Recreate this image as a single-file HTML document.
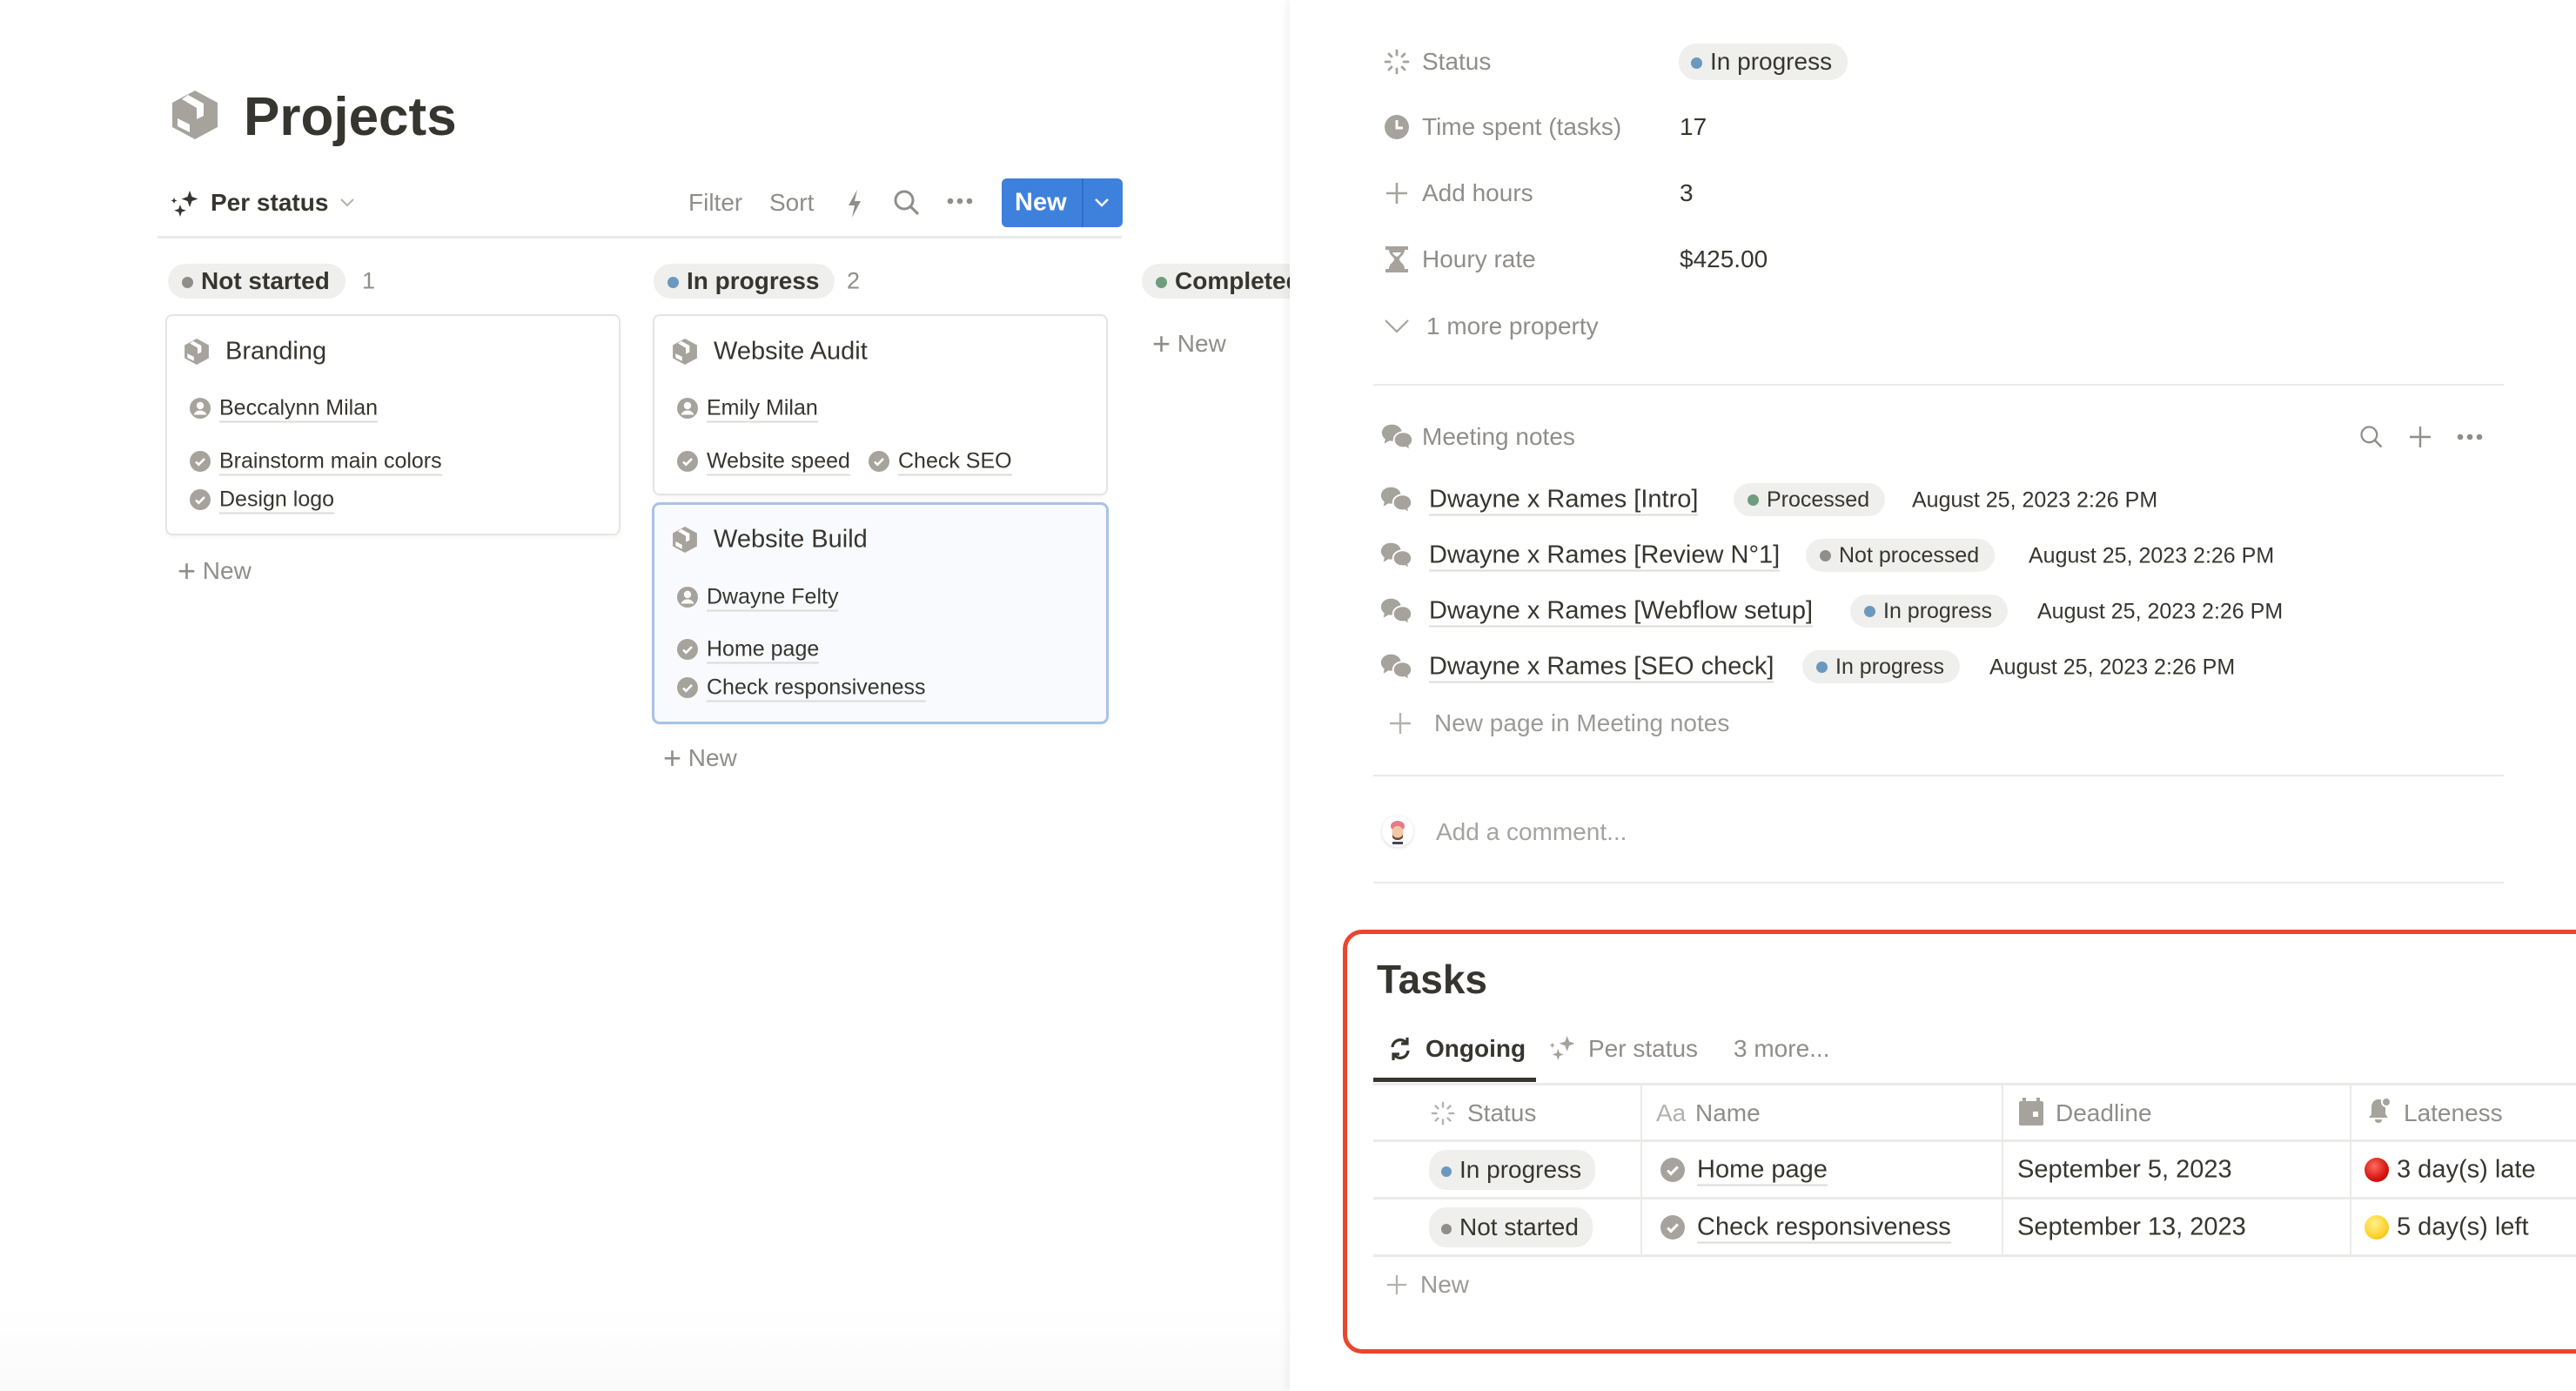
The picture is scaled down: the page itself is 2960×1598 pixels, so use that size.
<!DOCTYPE html>
<html><head><meta charset="utf-8">
<style>
*{margin:0;padding:0;box-sizing:border-box}
html,body{width:2960px;height:1598px;overflow:hidden;background:#fff}
body{position:relative;font-family:"Liberation Sans",sans-serif;color:#37352f}
.a{position:absolute}
.t{position:absolute;line-height:1;white-space:nowrap;transform:translateY(-50%)}
.g{color:#8f8e8a}
.u{border-bottom:2px solid #dcdbd8;padding-bottom:1px}
.pill{position:absolute;height:40px;border-radius:20px;background:#efefed;line-height:40px;white-space:nowrap;transform:translateY(-50%);padding:0 18px 0 16px;font-size:26px}
.pill i{display:inline-block;width:13px;height:13px;border-radius:50%;margin-right:9px;vertical-align:1px}
.blue{background:#6a98bf}.gray{background:#8f8e8a}.green{background:#6f9c7e}
.card{position:absolute;background:#fff;border-radius:6px;box-shadow:0 0 0 2px #e6e5e2,0 3px 6px rgba(0,0,0,.07)}
.ic{position:absolute;transform:translateY(-50%)}
.b500{font-weight:bold}
</style></head><body>

<!-- left panel bottom gradient -->
<div class="a" style="left:0;top:1500px;width:1482px;height:98px;background:linear-gradient(#fff,#fafafa)"></div>

<div class="pill" style="left:1312px;top:323px;font-size:28px;font-weight:bold"><i class="green"></i>Completed</div>
<div class="t g" style="left:1324px;top:395px;font-size:28px"><span style="font-size:36px;font-weight:100;vertical-align:-3px">+</span>&nbsp;New</div>

<!-- right panel -->
<div class="a" style="left:1482px;top:0;width:1478px;height:1598px;background:#fff;box-shadow:-3px 0 10px rgba(0,0,0,.06)"></div>

<!-- Projects header -->
<svg class="a" style="left:196px;top:103px" width="56" height="58" viewBox="0 0 56 58"><polygon points="28,1 54,15 54,43 28,57 2,43 2,15" fill="#a6a39c"/><polygon points="20,6 38,16 38,30 30,34 30,21 13,11" fill="#fff"/><polygon points="8,33 22,40 22,49 8,42" fill="#fff"/></svg>
<div class="t" style="left:280px;top:135px;font-size:62px;font-weight:bold">Projects</div>

<!-- toolbar -->
<svg class="a" style="left:196px;top:218px" width="34" height="34" viewBox="0 0 34 34" fill="#37352f"><path d="M22 1l2.5 7 7 2.5-7 2.5L22 20l-2.5-7-7-2.5 7-2.5z"/><path d="M11 17l1.8 5 5 1.8-5 1.8L11 31l-1.8-5.4-5-1.8 5-1.8z"/><path d="M4 9l1 2.5 2.5 1-2.5 1L4 16l-1-2.5-2.5-1 2.5-1z"/></svg>
<div class="t b500" style="left:242px;top:233px;font-size:28px">Per status</div>
<svg class="a" style="left:390px;top:226px" width="18" height="14" viewBox="0 0 18 14"><path d="M2 3l7 7 7-7" stroke="#b3b2ae" stroke-width="2" fill="none"/></svg>
<div class="t g" style="left:791px;top:233px;font-size:28px">Filter</div>
<div class="t g" style="left:884px;top:233px;font-size:28px">Sort</div>
<svg class="a" style="left:970px;top:216px" width="24" height="36" viewBox="0 0 24 36"><path d="M15 2L5 20h7l-3 14 10-19h-7z" fill="#8f8e8a"/></svg>
<svg class="a" style="left:1025px;top:216px" width="34" height="34" viewBox="0 0 34 34"><circle cx="14" cy="14" r="10" stroke="#8f8e8a" stroke-width="3" fill="none"/><path d="M21 21l9 9" stroke="#8f8e8a" stroke-width="3.2"/></svg>
<svg class="a" style="left:1088px;top:226px" width="30" height="10" viewBox="0 0 30 10" fill="#8f8e8a"><circle cx="4" cy="5" r="3.3"/><circle cx="15" cy="5" r="3.3"/><circle cx="26" cy="5" r="3.3"/></svg>
<div class="a" style="left:1151px;top:205px;width:139px;height:56px;background:#3e81dc;border-radius:6px"></div>
<div class="a" style="left:1243px;top:205px;width:2px;height:56px;background:#2f6ec4"></div>
<div class="t" style="left:1166px;top:233px;font-size:29px;font-weight:bold;color:#fff">New</div>
<svg class="a" style="left:1256px;top:226px" width="20" height="14" viewBox="0 0 20 14"><path d="M3 3l7 7 7-7" stroke="#fff" stroke-width="2.4" fill="none"/></svg>
<div class="a" style="left:181px;top:271px;width:1108px;height:3px;background:#ebeae8"></div>

<!-- column headers -->
<div class="pill" style="left:193px;top:323px;font-size:28px;font-weight:bold"><i class="gray"></i>Not started</div>
<div class="t g" style="left:416px;top:323px;font-size:27px">1</div>
<div class="pill" style="left:751px;top:323px;font-size:28px;font-weight:bold"><i class="blue"></i>In progress</div>
<div class="t g" style="left:973px;top:323px;font-size:27px">2</div>

<!-- cards -->
<div class="card" style="left:192px;top:363px;width:519px;height:250px"></div>
<div class="card" style="left:752px;top:363px;width:519px;height:204px"></div>
<div class="card" style="left:752px;top:580px;width:519px;height:249px;background:#f8fafd;box-shadow:0 0 0 3px #a9c2e6,0 3px 6px rgba(0,0,0,.07)"></div>

<svg width="0" height="0" style="position:absolute"><defs>
<symbol id="cube" viewBox="0 0 56 58"><polygon points="28,1 54,15 54,43 28,57 2,43 2,15" fill="#a6a39c"/><polygon points="20,6 38,16 38,30 30,34 30,21 13,11" fill="#fff"/><polygon points="8,33 22,40 22,49 8,42" fill="#fff"/></symbol>
<symbol id="per" viewBox="0 0 24 24"><circle cx="12" cy="12" r="12" fill="#a6a39c"/><circle cx="12" cy="9" r="4.2" fill="#fff"/><path d="M4.5 19.5c1.5-3.5 4-5 7.5-5s6 1.5 7.5 5z" fill="#fff"/></symbol>
<symbol id="chk" viewBox="0 0 24 24"><circle cx="12" cy="12" r="12" fill="#a6a39c"/><path d="M7 12.5l3.3 3.3L17 9" stroke="#fff" stroke-width="2.6" fill="none"/></symbol>
<symbol id="chat" viewBox="0 0 42 34"><path d="M14 2C7 2 2 6.5 2 12c0 3 1.5 5.5 4 7.5L5 25l6-3.5c1 .2 2 .3 3 .3 7 0 12-4.5 12-10S21 2 14 2z" fill="#a6a39c"/><path d="M28 11c-6.5 0-11.5 4.3-11.5 9.5S21.5 30 28 30c1 0 1.8-.1 2.7-.3L36 33l-1-5.2c2.5-1.8 4-4.3 4-7.3C39 15.3 34.5 11 28 11z" fill="#a6a39c" stroke="#fff" stroke-width="2"/></symbol>
</defs></svg>

<svg class="ic" style="left:211px;top:404px" width="30" height="31"><use href="#cube"/></svg>
<div class="t" style="left:259px;top:404px;font-size:29px">Branding</div>
<svg class="ic" style="left:218px;top:469px" width="24" height="24"><use href="#per"/></svg>
<div class="t" style="left:252px;top:469px;font-size:25px"><span class="u">Beccalynn Milan</span></div>
<svg class="ic" style="left:218px;top:530px" width="24" height="24"><use href="#chk"/></svg>
<div class="t" style="left:252px;top:530px;font-size:25px"><span class="u">Brainstorm main colors</span></div>
<svg class="ic" style="left:218px;top:574px" width="24" height="24"><use href="#chk"/></svg>
<div class="t" style="left:252px;top:574px;font-size:25px"><span class="u">Design logo</span></div>
<div class="t g" style="left:204px;top:656px;font-size:28px"><span style="font-size:36px;font-weight:100;vertical-align:-3px">+</span>&nbsp;New</div>

<svg class="ic" style="left:772px;top:404px" width="30" height="31"><use href="#cube"/></svg>
<div class="t" style="left:820px;top:404px;font-size:29px">Website Audit</div>
<svg class="ic" style="left:778px;top:469px" width="24" height="24"><use href="#per"/></svg>
<div class="t" style="left:812px;top:469px;font-size:25px"><span class="u">Emily Milan</span></div>
<svg class="ic" style="left:778px;top:530px" width="24" height="24"><use href="#chk"/></svg>
<div class="t" style="left:812px;top:530px;font-size:25px"><span class="u">Website speed</span></div>
<svg class="ic" style="left:998px;top:530px" width="24" height="24"><use href="#chk"/></svg>
<div class="t" style="left:1032px;top:530px;font-size:25px"><span class="u">Check SEO</span></div>

<svg class="ic" style="left:772px;top:620px" width="30" height="31"><use href="#cube"/></svg>
<div class="t" style="left:820px;top:620px;font-size:29px">Website Build</div>
<svg class="ic" style="left:778px;top:686px" width="24" height="24"><use href="#per"/></svg>
<div class="t" style="left:812px;top:686px;font-size:25px"><span class="u">Dwayne Felty</span></div>
<svg class="ic" style="left:778px;top:746px" width="24" height="24"><use href="#chk"/></svg>
<div class="t" style="left:812px;top:746px;font-size:25px"><span class="u">Home page</span></div>
<svg class="ic" style="left:778px;top:790px" width="24" height="24"><use href="#chk"/></svg>
<div class="t" style="left:812px;top:790px;font-size:25px"><span class="u">Check responsiveness</span></div>
<div class="t g" style="left:762px;top:871px;font-size:28px"><span style="font-size:36px;font-weight:100;vertical-align:-3px">+</span>&nbsp;New</div>

<!-- properties -->
<svg class="ic" style="left:1589px;top:71px" width="32" height="32" viewBox="0 0 32 32" stroke="#a6a39c" stroke-width="2.8" stroke-linecap="round"><path d="M16 3v5M16 24v5M3 16h5M24 16h5M7 7l3 3M22 22l3 3M25 7l-3 3M10 22l-3 3"/></svg>
<div class="t g" style="left:1634px;top:71px;font-size:28px">Status</div>
<div class="pill" style="left:1929px;top:71px;font-size:28px;padding:0 18px 0 14px;height:42px;line-height:42px"><i class="blue"></i>In progress</div>
<svg class="ic" style="left:1591px;top:146px" width="28" height="28" viewBox="0 0 28 28"><circle cx="14" cy="14" r="14" fill="#a6a39c"/><path d="M14 6v9h7" stroke="#fff" stroke-width="3" fill="none"/></svg>
<div class="t g" style="left:1634px;top:146px;font-size:28px">Time spent (tasks)</div>
<div class="t" style="left:1930px;top:146px;font-size:28px">17</div>
<svg class="ic" style="left:1591px;top:222px" width="28" height="28" viewBox="0 0 28 28"><path d="M14 2v24M2 14h24" stroke="#a6a39c" stroke-width="2.6"/></svg>
<div class="t g" style="left:1634px;top:222px;font-size:28px">Add hours</div>
<div class="t" style="left:1930px;top:222px;font-size:28px">3</div>
<svg class="ic" style="left:1592px;top:298px" width="26" height="30" viewBox="0 0 26 30" fill="#a6a39c"><rect x="0" y="0" width="26" height="4"/><rect x="0" y="26" width="26" height="4"/><path d="M4 4h18c0 6-6 8-6 11s6 5 6 11H4c0-6 6-8 6-11S4 10 4 4z"/><path d="M8 7h10c-1 3-5 5-5 5s-4-2-5-5z" fill="#fff"/></svg>
<div class="t g" style="left:1634px;top:298px;font-size:28px">Houry rate</div>
<div class="t" style="left:1930px;top:298px;font-size:28px">$425.00</div>
<svg class="ic" style="left:1590px;top:375px" width="30" height="20" viewBox="0 0 30 20"><path d="M2 3l13 13L28 3" stroke="#a6a39c" stroke-width="2.2" fill="none"/></svg>
<div class="t g" style="left:1639px;top:375px;font-size:28px">1 more property</div>
<div class="a" style="left:1578px;top:441px;width:1299px;height:2px;background:#ebeae8"></div>

<!-- meeting notes -->
<svg class="ic" style="left:1586px;top:502px" width="40" height="33"><use href="#chat"/></svg>
<div class="t g" style="left:1634px;top:502px;font-size:28px">Meeting notes</div>
<svg class="a" style="left:2710px;top:487px" width="30" height="30" viewBox="0 0 34 34"><circle cx="14" cy="14" r="10" stroke="#8f8e8a" stroke-width="2.6" fill="none"/><path d="M21 21l9 9" stroke="#8f8e8a" stroke-width="2.8"/></svg>
<svg class="a" style="left:2767px;top:488px" width="28" height="28" viewBox="0 0 28 28"><path d="M14 2v24M2 14h24" stroke="#8f8e8a" stroke-width="2.4"/></svg>
<svg class="a" style="left:2822px;top:497px" width="32" height="10" viewBox="0 0 30 10" fill="#8f8e8a"><circle cx="4" cy="5" r="3.3"/><circle cx="15" cy="5" r="3.3"/><circle cx="26" cy="5" r="3.3"/></svg>

<svg class="ic" style="left:1585px;top:574px" width="40" height="33"><use href="#chat"/></svg>
<div class="t" style="left:1642px;top:574px;font-size:29px"><span class="u">Dwayne x Rames [Intro]</span></div>
<div class="pill" style="left:1992px;top:574px;font-size:25px;height:38px;line-height:38px"><i class="green"></i>Processed</div>
<div class="t" style="left:2197px;top:575px;font-size:25px">August 25, 2023 2:26 PM</div>

<svg class="ic" style="left:1585px;top:638px" width="40" height="33"><use href="#chat"/></svg>
<div class="t" style="left:1642px;top:638px;font-size:29px"><span class="u">Dwayne x Rames [Review N°1]</span></div>
<div class="pill" style="left:2075px;top:638px;font-size:25px;height:38px;line-height:38px"><i class="gray"></i>Not processed</div>
<div class="t" style="left:2331px;top:639px;font-size:25px">August 25, 2023 2:26 PM</div>

<svg class="ic" style="left:1585px;top:702px" width="40" height="33"><use href="#chat"/></svg>
<div class="t" style="left:1642px;top:702px;font-size:29px"><span class="u">Dwayne x Rames [Webflow setup]</span></div>
<div class="pill" style="left:2126px;top:702px;font-size:25px;height:38px;line-height:38px"><i class="blue"></i>In progress</div>
<div class="t" style="left:2341px;top:703px;font-size:25px">August 25, 2023 2:26 PM</div>

<svg class="ic" style="left:1585px;top:766px" width="40" height="33"><use href="#chat"/></svg>
<div class="t" style="left:1642px;top:766px;font-size:29px"><span class="u">Dwayne x Rames [SEO check]</span></div>
<div class="pill" style="left:2071px;top:766px;font-size:25px;height:38px;line-height:38px"><i class="blue"></i>In progress</div>
<div class="t" style="left:2286px;top:767px;font-size:25px">August 25, 2023 2:26 PM</div>

<svg class="ic" style="left:1595px;top:831px" width="28" height="28" viewBox="0 0 28 28"><path d="M14 2v24M2 14h24" stroke="#b3b2ae" stroke-width="2.4"/></svg>
<div class="t g" style="left:1648px;top:831px;font-size:28px;color:#9b9a97">New page in Meeting notes</div>
<div class="a" style="left:1578px;top:890px;width:1299px;height:2px;background:#ebeae8"></div>

<!-- comment -->
<div class="a" style="left:1588px;top:937px;width:36px;height:36px;border-radius:50%;background:#fff;box-shadow:0 1px 4px rgba(0,0,0,.15)"></div>
<svg class="a" style="left:1592px;top:940px" width="28" height="30" viewBox="0 0 28 30"><ellipse cx="14" cy="9" rx="8" ry="6" fill="#e87a86"/><ellipse cx="14" cy="16" rx="6.5" ry="7" fill="#f1c7a5"/><path d="M8 18c1 6 11 6 12 0v4c-2 4-10 4-12 0z" fill="#6b4a3a"/><path d="M8 27h12v3H8z" fill="#445"/></svg>
<div class="t" style="left:1650px;top:956px;font-size:28px;color:#a4a3a0">Add a comment...</div>
<div class="a" style="left:1578px;top:1013px;width:1299px;height:2px;background:#ebeae8"></div>

<!-- Tasks box -->
<div class="a" style="left:1543px;top:1068px;width:1440px;height:487px;border:5px solid #e9462d;border-radius:22px"></div>
<div class="t" style="left:1582px;top:1125px;font-size:46px;font-weight:bold">Tasks</div>
<svg class="ic" style="left:1594px;top:1205px" width="30" height="30" viewBox="0 0 30 30" stroke="#37352f" stroke-width="3.2" fill="none"><path d="M6 13a9 9 0 0 1 16-5"/><path d="M23 2v7h-7"/><path d="M24 17a9 9 0 0 1-16 5"/><path d="M7 28v-7h7"/></svg>
<div class="t" style="left:1638px;top:1205px;font-size:28px;font-weight:bold">Ongoing</div>
<svg class="a" style="left:1780px;top:1189px" width="32" height="32" viewBox="0 0 34 34" fill="#a6a39c"><path d="M22 1l2.5 7 7 2.5-7 2.5L22 20l-2.5-7-7-2.5 7-2.5z"/><path d="M11 17l1.8 5 5 1.8-5 1.8L11 31l-1.8-5.4-5-1.8 5-1.8z"/><path d="M4 9l1 2.5 2.5 1-2.5 1L4 16l-1-2.5-2.5-1 2.5-1z"/></svg>
<div class="t g" style="left:1825px;top:1205px;font-size:28px">Per status</div>
<div class="t g" style="left:1992px;top:1205px;font-size:28px">3 more...</div>
<div class="a" style="left:1578px;top:1238px;width:187px;height:5px;background:#37352f"></div>
<div class="a" style="left:1578px;top:1244px;width:1382px;height:3px;background:#ebeae8"></div>
<div class="a" style="left:1578px;top:1309px;width:1382px;height:3px;background:#ebeae8"></div>
<div class="a" style="left:1578px;top:1375px;width:1382px;height:3px;background:#ebeae8"></div>
<div class="a" style="left:1578px;top:1441px;width:1382px;height:3px;background:#ebeae8"></div>
<div class="a" style="left:1885px;top:1246px;width:2px;height:196px;background:#ebeae8"></div>
<div class="a" style="left:2300px;top:1246px;width:2px;height:196px;background:#ebeae8"></div>
<div class="a" style="left:2700px;top:1246px;width:2px;height:196px;background:#ebeae8"></div>

<svg class="ic" style="left:1643px;top:1279px" width="30" height="30" viewBox="0 0 32 32" stroke="#b3b2ae" stroke-width="2.6" stroke-linecap="round"><path d="M16 3v5M16 24v5M3 16h5M24 16h5M7 7l3 3M22 22l3 3M25 7l-3 3M10 22l-3 3"/></svg>
<div class="t g" style="left:1686px;top:1279px;font-size:28px">Status</div>
<div class="t" style="left:1903px;top:1279px;font-size:28px;color:#b3b2ae">Aa</div>
<div class="t g" style="left:1948px;top:1279px;font-size:28px">Name</div>
<svg class="ic" style="left:2320px;top:1277px" width="28" height="32" viewBox="0 0 28 32" fill="#a6a39c"><rect x="0" y="4" width="28" height="28" rx="2"/><rect x="4" y="0" width="4" height="8"/><rect x="20" y="0" width="4" height="8"/><rect x="16" y="16" width="6" height="6" fill="#fff"/></svg>
<div class="t g" style="left:2362px;top:1279px;font-size:28px">Deadline</div>
<svg class="ic" style="left:2720px;top:1277px" width="30" height="34" viewBox="0 0 30 34" fill="#a6a39c"><path d="M13 3c-5 0-8 4-8 9v8l-3 4h22l-3-4v-8c0-5-3-9-8-9z"/><circle cx="22" cy="6" r="5" stroke="#fff" stroke-width="2"/><path d="M9 26h8c0 3-2 4-4 4s-4-1-4-4z"/></svg>
<div class="t g" style="left:2762px;top:1279px;font-size:28px">Lateness</div>

<div class="pill" style="left:1642px;top:1344px;font-size:28px;height:46px;line-height:46px;padding:0 16px 0 14px"><i class="blue" style="width:12px;height:12px"></i>In progress</div>
<svg class="ic" style="left:1908px;top:1344px" width="28" height="28"><use href="#chk"/></svg>
<div class="t" style="left:1950px;top:1344px;font-size:29px"><span class="u">Home page</span></div>
<div class="t" style="left:2318px;top:1344px;font-size:29px">September 5, 2023</div>
<div class="ic" style="left:2717px;top:1344px;width:28px;height:28px;border-radius:50%;background:radial-gradient(circle at 40% 35%,#ff6b5e,#d4140f 60%,#a30d0a)"></div>
<div class="t" style="left:2754px;top:1344px;font-size:29px">3 day(s) late</div>

<div class="pill" style="left:1642px;top:1410px;font-size:28px;height:46px;line-height:46px;padding:0 16px 0 14px"><i class="gray" style="width:12px;height:12px"></i>Not started</div>
<svg class="ic" style="left:1908px;top:1410px" width="28" height="28"><use href="#chk"/></svg>
<div class="t" style="left:1950px;top:1410px;font-size:29px"><span class="u">Check responsiveness</span></div>
<div class="t" style="left:2318px;top:1410px;font-size:29px">September 13, 2023</div>
<div class="ic" style="left:2717px;top:1410px;width:28px;height:28px;border-radius:50%;background:radial-gradient(circle at 40% 35%,#fff08a,#fcd22c 60%,#e8b00c)"></div>
<div class="t" style="left:2754px;top:1410px;font-size:29px">5 day(s) left</div>

<svg class="ic" style="left:1592px;top:1476px" width="26" height="26" viewBox="0 0 28 28"><path d="M14 2v24M2 14h24" stroke="#b3b2ae" stroke-width="2.4"/></svg>
<div class="t g" style="left:1632px;top:1476px;font-size:28px;color:#9b9a97">New</div>
</body></html>
